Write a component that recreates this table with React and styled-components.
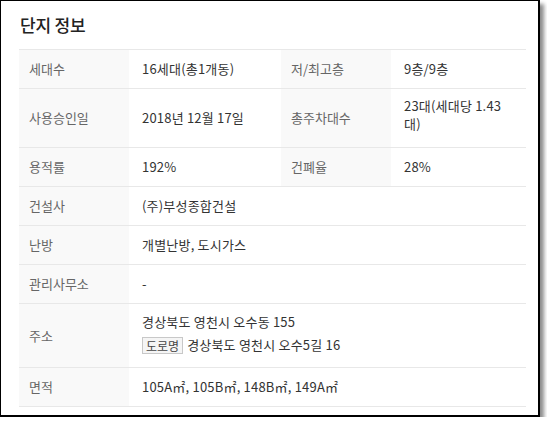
import React from "react";
import styled, { createGlobalStyle } from "styled-components";

const GlobalStyle = createGlobalStyle`
  html, body { margin: 0; padding: 0; background: #fff; }
  body {
    font-family: "Noto Sans CJK KR", "Noto Sans", sans-serif;
    -webkit-font-smoothing: antialiased;
  }
`;

const Frame = styled.div`
  box-sizing: border-box;
  width: 540px;
  height: 417px;
  border-style: solid;
  border-color: #000;
  border-width: 1px 2px 2px 1px;
  background: #fff;
  box-shadow: 4px 4px 4px rgba(0, 0, 0, 0.45);
  padding: 0 12px 0 18px;
`;

const Title = styled.h2`
  margin: 0;
  padding-left: 1px;
  height: 48px;
  line-height: 48px;
  font-size: 17px;
  font-weight: 500;
  color: #222;
  letter-spacing: -0.2px;
`;

const Table = styled.div`
  display: grid;
  width: 507px;
  grid-template-columns: 110px 152px 110px 135px;
  border-top: 1px solid #e8e8e8;
`;

const Label = styled.div`
  display: flex;
  align-items: center;
  background: #f9f9f9;
  color: #666;
  font-size: 13px;
  line-height: 18px;
  padding: 10px 10px;
  border-bottom: 1px solid #e8e8e8;
`;

const Value = styled.div`
  display: flex;
  flex-direction: column;
  justify-content: center;
  color: #333;
  font-size: 13px;
  line-height: 18px;
  letter-spacing: 0.2px;
  padding: ${(p) => p.$pad || "10px 13px"};
  border-bottom: 1px solid #e8e8e8;
  grid-column: ${(p) => (p.$wide ? "span 3" : "auto")};
  word-break: keep-all;
`;

const Line = styled.div`
  display: flex;
  align-items: center;
  gap: 4px;
  height: ${(p) => p.$h || "18px"};
  margin-top: ${(p) => p.$mt || "0"};
`;

const Badge = styled.span`
  display: inline-flex;
  align-items: center;
  box-sizing: border-box;
  height: 17px;
  padding: 0 3px;
  border: 1px solid #c8c8c8;
  background: #f5f5f5;
  color: #444;
  font-size: 12px;
  line-height: 15px;
  letter-spacing: 0;
`;

const rows = [
  { k: "세대수", v: "16세대(총1개동)", k2: "저/최고층", v2: "9층/9층" },
  { k: "사용승인일", v: "2018년 12월 17일", k2: "총주차대수", v2: "23대(세대당 1.43 대)", tall: true },
  { k: "용적률", v: "192%", k2: "건폐율", v2: "28%" },
  { k: "건설사", v: "(주)부성종합건설" },
  { k: "난방", v: "개별난방, 도시가스" },
  { k: "관리사무소", v: "-" },
];

export default function App() {
  return (
    <>
      <GlobalStyle />
      <Frame>
        <Title>단지 정보</Title>
        <Table>
          {rows.map((r) => (
            <React.Fragment key={r.k}>
              <Label>{r.k}</Label>
              {r.k2 ? (
                <>
                  <Value>{r.v}</Value>
                  <Label>{r.k2}</Label>
                  <Value $pad={r.tall ? "8px 13px 14px" : undefined}>{r.v2}</Value>
                </>
              ) : (
                <Value $wide>{r.v}</Value>
              )}
            </React.Fragment>
          ))}
          <Label>주소</Label>
          <Value $wide $pad="9px 13px 12px">
            <Line>경상북도 영천시 오수동 155</Line>
            <Line $h="20px" $mt="4px">
              <Badge>도로명</Badge>
              경상북도 영천시 오수5길 16
            </Line>
          </Value>
          <Label>면적</Label>
          <Value $wide>105A㎡, 105B㎡, 148B㎡, 149A㎡</Value>
        </Table>
      </Frame>
    </>
  );
}
